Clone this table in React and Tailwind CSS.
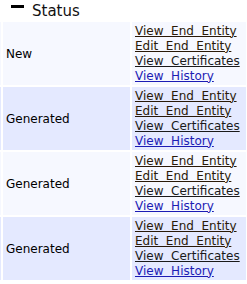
const rows = [
  { status: 'New', bg: 'bg-[#f6f8ff]' },
  { status: 'Generated', bg: 'bg-[#e4e9ff]' },
  { status: 'Generated', bg: 'bg-[#f6f8ff]' },
  { status: 'Generated', bg: 'bg-[#e4e9ff]' },
];

const links = [
  { label: 'View \u00a0End \u00a0Entity', color: 'text-[#2a1a08]' },
  { label: 'Edit \u00a0End \u00a0Entity', color: 'text-[#2a1a08]' },
  { label: 'View \u00a0Certificates', color: 'text-[#1a1a1a]' },
  { label: 'View \u00a0History', color: 'text-[#1c1cb4]' },
];

export default function App() {
  return (
    <div className="w-[247px] h-[284px] overflow-hidden bg-white font-['DejaVu_Sans',Verdana,sans-serif] text-black">
      {/* Header */}
      <div className="h-[22px] flex items-start pl-[11px] pt-[2px]">
        <span className="w-[13px] h-[3px] mt-[3px] bg-black" />
        <span className="ml-[8px] text-[15px] leading-[18px] text-[#111]">Status</span>
      </div>

      {/* Rows */}
      <div className="flex flex-col gap-[2px]">
        {rows.map((r, i) => (
          <div key={i} className="flex h-[63px]">
            <div className={`w-px ${r.bg}`} />
            <div className={`w-[127px] ml-[2px] flex items-center pl-[3px] text-[12px] ${r.bg}`}>
              {r.status}
            </div>
            <div className={`w-[114px] ml-[2px] flex flex-col justify-center pl-[3px] text-[12px] leading-[15px] ${r.bg}`}>
              {links.map((l, j) => (
                <a key={j} href="#" className={`underline whitespace-nowrap self-start ${l.color}`}>
                  {l.label}
                </a>
              ))}
            </div>
          </div>
        ))}
      </div>
    </div>
  );
}
